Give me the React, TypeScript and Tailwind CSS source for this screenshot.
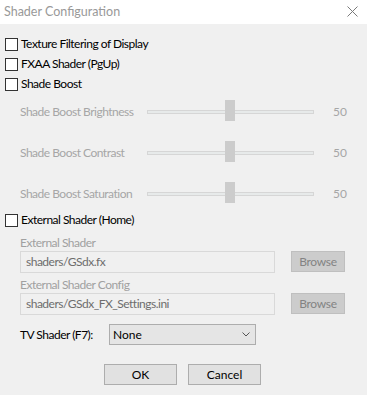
import React from "react";

const font = { fontFamily: 'Lato, "Noto Sans", sans-serif' };

function Check({ label }: { label: string }) {
  return (
    <div className="flex h-[20px] items-center pl-[5px]">
      <span className="h-[13px] w-[13px] border border-[#333333] bg-white" />
      <span className="ml-[3px] whitespace-nowrap text-[12px] leading-none tracking-[-0.5px] text-black">{label}</span>
    </div>
  );
}

function SliderRow({ label }: { label: string }) {
  return (
    <div className="flex h-[22px] items-center pl-[20px]">
      <span className="w-[127px] whitespace-nowrap text-[12px] leading-none tracking-[-0.5px] text-[#a6a6a6]">{label}</span>
      <div className="relative flex h-[22px] w-[167px] items-center">
        <div className="h-[4px] w-full border border-[#d6d6d6] bg-[#e7eaea]" />
        <div className="absolute left-[78px] top-[-1px] h-[21px] w-[10px] bg-[#cccccc]" />
      </div>
      <span className="ml-[19px] text-[12px] leading-none text-[#a6a6a6]">50</span>
    </div>
  );
}

function PathRow({ label, value, first }: { label: string; value: string; first?: boolean }) {
  return (
    <div className={`pl-[20px] ${first ? "mt-[6px]" : "mt-[5px]"}`}>
      <div className="h-[14px] whitespace-nowrap text-[12px] leading-[14px] tracking-[-0.5px] text-[#a0a0a0]">{label}</div>
      <div className="mt-[1px] flex items-start">
        <div className="flex h-[22px] w-[255px] items-center border border-[#d9d9d9] bg-[#f0f0f0] pl-[5px] text-[12px] tracking-[-0.5px] text-[#6d6d6d]">
          {value}
        </div>
        <div className="ml-[16px] flex h-[21px] w-[54px] items-center justify-center border border-[#bfbfbf] bg-[#cccccc] text-[12px] tracking-[-0.3px] text-[#838383]">
          Browse
        </div>
      </div>
    </div>
  );
}

export default function App() {
  return (
    <div className="h-[395px] w-[367px] overflow-hidden bg-[#f0f0f0]" style={font}>
      <div className="flex h-[24px] items-center justify-between bg-white pl-[4px] pr-[9px]">
        <span className="text-[12.5px] leading-none text-[#999999]">Shader Configuration</span>
        <svg width="11" height="11" viewBox="0 0 11 11" className="mt-[-2px]">
          <path d="M0.5 0.5 L10.5 10.5 M10.5 0.5 L0.5 10.5" stroke="#7a7a7a" strokeWidth="1" />
        </svg>
      </div>

      <div className="flex flex-col pt-[10px]">
        <Check label="Texture Filtering of Display" />
        <Check label="FXAA Shader (PgUp)" />
        <Check label="Shade Boost" />

        <div className="mt-[7px] flex flex-col gap-[19px]">
          <SliderRow label="Shade Boost Brightness" />
          <SliderRow label="Shade Boost Contrast" />
          <SliderRow label="Shade Boost Saturation" />
        </div>

        <div className="mt-[5px]">
          <Check label="External Shader (Home)" />
        </div>

        <PathRow label="External Shader" value="shaders/GSdx.fx" first />
        <PathRow label="External Shader Config" value="shaders/GSdx_FX_Settings.ini" />

        <div className="mt-[9px] flex items-center pl-[20px]">
          <span className="w-[89px] whitespace-nowrap text-[12px] leading-none tracking-[-0.5px] text-black">TV Shader (F7):</span>
          <div className="flex h-[21px] w-[147px] items-center justify-between border border-[#adadad] bg-[#e5e5e5] pl-[3px] pr-[5px] text-[12px] text-black">
            <span>None</span>
            <svg width="8" height="5" viewBox="0 0 8 5">
              <path d="M0.5 0.5 L4 4 L7.5 0.5" stroke="#555555" strokeWidth="1" fill="none" />
            </svg>
          </div>
        </div>

        <div className="mt-[19px] flex gap-[11px] pl-[104px]">
          <button className="h-[21px] w-[73px] border border-[#adadad] bg-[#e1e1e1] text-[12px] text-black">
            OK
          </button>
          <button className="h-[21px] w-[73px] border border-[#adadad] bg-[#e1e1e1] text-[12px] text-black">
            Cancel
          </button>
        </div>
      </div>
    </div>
  );
}
